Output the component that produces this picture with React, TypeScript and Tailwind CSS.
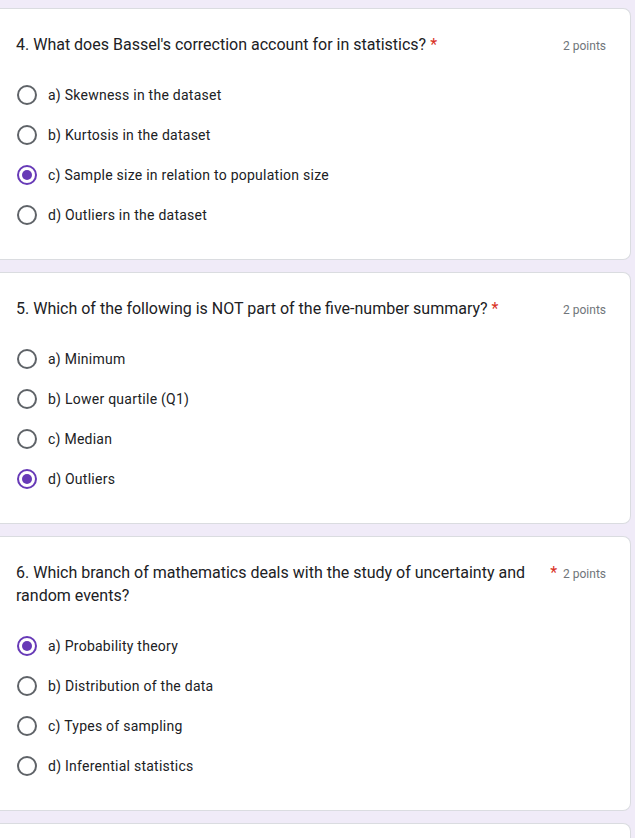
import React from "react";

type Question = {
  title: string;
  options: string[];
  selected: number;
};

const questions: Question[] = [
  {
    title: "4. What does Bassel's correction account for in statistics?",
    options: [
      "a) Skewness in the dataset",
      "b) Kurtosis in the dataset",
      "c) Sample size in relation to population size",
      "d) Outliers in the dataset",
    ],
    selected: 2,
  },
  {
    title: "5. Which of the following is NOT part of the five-number summary?",
    options: ["a) Minimum", "b) Lower quartile (Q1)", "c) Median", "d) Outliers"],
    selected: 3,
  },
  {
    title: "6. Which branch of mathematics deals with the study of uncertainty and random events?",
    options: [
      "a) Probability theory",
      "b) Distribution of the data",
      "c) Types of sampling",
      "d) Inferential statistics",
    ],
    selected: 0,
  },
];

const Radio = ({ checked }: { checked: boolean }) => {
  return (
    <div
      className={
        checked
          ? "ml-px w-5 h-5 shrink-0 rounded-full border-2 border-[#673ab7] flex items-center justify-center"
          : "ml-px w-5 h-5 shrink-0 rounded-full border-2 border-[#5f6368]"
      }
    >
      {checked && <div className="w-[10px] h-[10px] rounded-full bg-[#673ab7]" />}
    </div>
  );
};

const QuestionCard = ({ q }: { q: Question }) => {
  return (
    <div className="bg-white border-y border-r border-[#dadce0] rounded-r-lg pl-4 pr-6 pt-6 pb-6">
      <div className="flex items-start">
        <div className="flex flex-1 items-start">
          <span className="text-[16px] leading-[23px] text-[#202124]">{q.title}</span>
          <span className="pl-1 text-[16px] leading-[23px] text-[#d93025] shrink-0">*</span>
        </div>
        <div className="pl-[6px] pt-[2px] h-[23px] text-[12px] leading-[23px] text-[#70757a] shrink-0">
          2 points
        </div>
      </div>
      <div className="mt-[19px] flex flex-col">
        {q.options.map((opt, i) => (
          <div key={opt} className="h-10 flex items-center gap-[11px]">
            <Radio checked={i === q.selected} />
            <span className="text-[14px] tracking-[0.25px] text-[#202124]">{opt}</span>
          </div>
        ))}
      </div>
    </div>
  );
};

export default function App() {
  return (
    <div
      className="min-h-[838px] bg-[#f0ebf8] pt-2 pr-1 flex flex-col gap-3"
      style={{ fontFamily: "Roboto, 'Liberation Sans', sans-serif" }}
    >
      {questions.map((q) => (
        <QuestionCard key={q.title} q={q} />
      ))}
      <div className="bg-white border-y border-r border-[#dadce0] rounded-r-lg h-16" />
    </div>
  );
}
